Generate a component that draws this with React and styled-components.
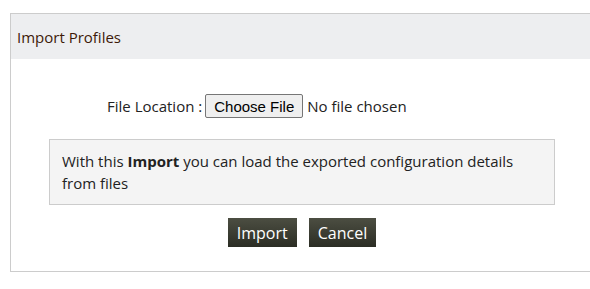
import React from "react";
import styled, { createGlobalStyle } from "styled-components";

const Global = createGlobalStyle`
  html, body {
    margin: 0;
    padding: 0;
    background: #fff;
    overflow: hidden;
  }
  body {
    font-family: "Open Sans", "Liberation Sans", sans-serif;
    color: #222;
  }
`;

const S = {
  Page: styled.div`
    padding: 13px 0 0 10px;
    width: 590px;
    box-sizing: border-box;
  `,
  Panel: styled.div`
    width: 600px;
    border: 1px solid #cccccc;
    background: #fff;
  `,
  Header: styled.div`
    height: 45px;
    display: flex;
    align-items: center;
    padding-left: 6px;
    padding-top: 1px;
    box-sizing: border-box;
    background: #edeef0;
    font-size: 15px;
    color: #3d1a08;
  `,
  Body: styled.div`
    padding: 35px 0 24px 38px;
  `,
  FileRow: styled.div`
    display: flex;
    align-items: center;
    height: 24px;
    padding-left: 58px;
    font-size: 15px;
    color: #222;
  `,
  Label: styled.span`
    margin-right: 3px;
  `,
  FileInput: styled.input`
    font-family: "Open Sans", "Liberation Sans", sans-serif;
    font-size: 15px;
    color: #222;
    &::file-selector-button {
      font-family: "Liberation Sans", Arial, sans-serif;
      font-size: 15px;
      height: 24px;
      padding: 0 8px;
      margin-right: 4px;
      border: 1px solid #767676;
      border-radius: 2px;
      background: #efefef;
      color: #000;
    }
  `,
  Info: styled.div`
    margin-top: 21px;
    width: 506px;
    box-sizing: border-box;
    padding: 10px 30px 10px 12px;
    border: 1px solid #cccccc;
    background: #f4f4f4;
    font-size: 15px;
    line-height: 22px;
    color: #222;
  `,
  Actions: styled.div`
    width: 506px;
    margin-top: 13px;
    display: flex;
    justify-content: center;
    gap: 12px;
  `,
  Button: styled.button`
    height: 29px;
    padding: 0 9px;
    border: none;
    background: linear-gradient(#4c4e42, #2b2d24);
    color: #fff;
    font-family: "Open Sans", "Liberation Sans", sans-serif;
    font-size: 16px;
    cursor: pointer;
  `,
};

const App = () => {
  return (
    <S.Page>
      <Global />
      <S.Panel>
        <S.Header>Import Profiles</S.Header>
        <S.Body>
          <S.FileRow>
            <S.Label>File Location :</S.Label>
            <S.FileInput type="file" />
          </S.FileRow>
          <S.Info>
            With this <b>Import</b> you can load the exported configuration
            details from files
          </S.Info>
          <S.Actions>
            <S.Button>Import</S.Button>
            <S.Button>Cancel</S.Button>
          </S.Actions>
        </S.Body>
      </S.Panel>
    </S.Page>
  );
};

export default App;
